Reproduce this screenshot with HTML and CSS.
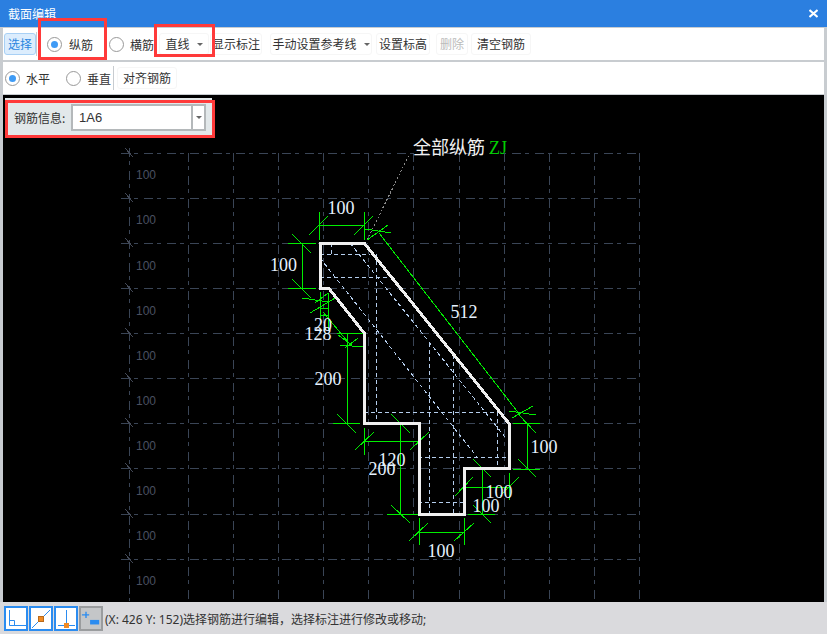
FILE: index.html
```html
<!DOCTYPE html>
<html lang="zh">
<head>
<meta charset="utf-8">
<title>截面编辑</title>
<link rel="stylesheet" href="styles.css">
</head>
<body>
<div class="window">
  <header class="titlebar">
    <span class="title">截面编辑</span>
    <svg class="close" width="9" height="9" viewBox="0 0 9 9"><path d="M.5 1L8.500 8M8.500 1L.5 8" stroke="#fff" stroke-width="2" fill="none"/></svg>
  </header>
  <div class="toolbar tb-one">
    <button class="tool selected">选择</button>
    <span class="vsep"></span>
    <label class="radio r-zong"><i class="dot on"></i>纵筋</label>
    <label class="radio r-heng"><i class="dot"></i>横筋</label>
    <button class="tool t-line">直线<i class="caret"></i></button>
    <button class="tool t-show">显示标注</button>
    <button class="tool t-manual">手动设置参考线<i class="caret"></i></button>
    <button class="tool t-elev">设置标高</button>
    <button class="tool t-del">删除</button>
    <button class="tool t-clear">清空钢筋</button>
  </div>
  <div class="toolbar tb-two">
    <label class="radio r-h"><i class="dot on"></i>水平</label>
    <label class="radio r-v"><i class="dot"></i>垂直</label>
    <span class="vsep"></span>
    <button class="tool t-align">对齐钢筋</button>
  </div>
  <main class="canvas">
    <div class="info">
      <span class="info-label">钢筋信息:</span>
      <div class="combo"><span class="combo-value">1A6</span><span class="combo-btn"><i class="caret"></i></span></div>
    </div>
    <svg class="drawing" width="827" height="507" viewBox="0 95 827 507">
      <g class="grid">
        <path d="M121 153.500H639M121 198.500H639M121 243.500H639M121 288.500H639M121 333.500H639M121 378.500H639M121 423.500H639M121 468.500H639M121 514.500H639M121 559.500H639"/>
        <path d="M129.500 148V601M188.500 153V601M233.500 153V601M278.500 153V601M323.500 153V601M368.500 153V601M413.500 153V601M459.500 153V601M504.500 153V601M549.500 153V601M594.500 153V601M639.500 153V601"/>
      </g>
      <path class="ticks" d="M125 148L133 157M125 193L133 202M125 238L133 247M125 283L133 292M125 328L133 337M125 373L133 382M125 418L133 427M125 463L133 472M125 509L133 518M125 554L133 563"/>
      <g class="axis-labels">
        <text x="136" y="179">100</text><text x="136" y="224">100</text><text x="136" y="270">100</text><text x="136" y="315">100</text><text x="136" y="360">100</text><text x="136" y="405">100</text><text x="136" y="450">100</text><text x="136" y="495">100</text><text x="136" y="540">100</text><text x="136" y="585">100</text>
      </g>
      <path class="leader" d="M367 240L409 155"/>
      <g class="inner">
        <path d="M320 254.500H370M320 277.500H390M331.500 243V254M376.500 254V423M364 412.500H500M418 457.500H509M418 502.500H464M429.500 343V514M453.500 355V514M497.500 412V469"/>
        <path d="M320 258L477 457M350 243L505 437"/>
      </g>
      <path class="dim" d="M319 225.500H364M319.500 212V240M364.500 212V240M309 235L328 216M354 235L373 216
        M302.500 243V288M288 243.500H316M288 288.500H316M292 234L311 253M292 279L311 298
        M379 233L520 415M365 229L391 233M367 240L388 225M509 411L536 415M512 418L533 406
        M302 298L328 302M320.500 292V320M328.500 293V330M310 313L337 297M315 303L328 293M320 308.500H328M320 315.500H328M323 312L348 342
        M337 333.500H363M347.500 333V423M340 345L363 347M345 348L358 338M338 335L352 345
        M333 423.500H360M337 414L356 433
        M364 441.500H419M364.500 428V455M419.500 428V455M355 450L374 432M410 450L429 432
        M400.500 423V514M387 423.500H418M387 514.500H418M391 414L410 433M391 505L410 523
        M527.500 423V469M513 423.500H540M513 469.500H540M518 414L536 433M518 459L536 477
        M482.500 469V514M468 469.500H495M468 514.500H495M473 459L491 477M473 505L491 523
        M464 487.500H509M464.500 475V500M509.500 473V500M455 496L473 477M500 496L519 477
        M419 532.500H464M419.500 518V545M464.500 518V545M409 541L428 523M454 541L474 523"/>
      <path class="outline" d="M320 243.500H364.500L509 423.500V468.500H464.500V514.500H419V423.500H364.500V333.500L329 288.500H320Z"/>
      <g class="labels">
        <text x="341" y="214">100</text><text x="283.500" y="271">100</text><text x="464" y="318">512</text>
        <text x="323" y="331">20</text><text x="318" y="340">128</text><text x="328" y="385">200</text>
        <text x="392" y="466">120</text><text x="382" y="475">200</text><text x="544" y="453">100</text>
        <text x="499" y="498">100</text><text x="486" y="512">100</text><text x="441" y="557">100</text>
      </g>
      <text class="note" x="413" y="154">全部纵筋 <tspan class="note-code">ZJ</tspan></text>
    </svg>
  </main>
  <footer class="statusbar">
    <button class="snap"><svg width="20" height="20" viewBox="0 0 20 20"><path d="M3.500 1V16.500H20M3.500 11.500H8.500V16.500" fill="none" stroke="#2b8cf0"/></svg></button>
    <button class="snap"><svg width="20" height="20" viewBox="0 0 20 20"><path d="M1 19L19 1" stroke="#2b8cf0"/><rect x="7.500" y="7.500" width="5" height="5" fill="#f08a24" stroke="#b86a1c"/></svg></button>
    <button class="snap"><svg width="20" height="20" viewBox="0 0 20 20"><path d="M10.500 1V16M2 16.500H19" fill="none" stroke="#2b8cf0"/><rect x="8" y="14" width="5" height="5" fill="#f08a24"/></svg></button>
    <button class="snap off"><svg width="22" height="20" viewBox="0 0 22 20"><path d="M1 5.500H9M5.500 2V9" fill="none" stroke="#2b8cf0" stroke-width="1.500"/><rect x="10" y="11" width="10" height="5" fill="#2b8cf0"/></svg></button>
    <span class="status-text">(X: 426 Y: 152)选择钢筋进行编辑，选择标注进行修改或移动;</span>
  </footer>
</div>
<div class="mark m-one"></div>
<div class="mark m-two"></div>
<div class="mark m-three"></div>
</body>
</html>
```
FILE: styles.css
```css
* { box-sizing: border-box; }
html, body { margin: 0; padding: 0; }
body {
  width: 827px;
  height: 634px;
  overflow: hidden;
  position: relative;
  background: #c8ccd0;
  font-family: "Noto Sans CJK SC", "Liberation Sans", sans-serif;
  font-size: 12px;
  color: #333;
}
.window { display: flex; flex-direction: column; height: 634px; }
.titlebar {
  height: 27px;
  flex: none;
  background: #2b7fe0;
  display: flex;
  align-items: center;
  justify-content: space-between;
  padding: 0 9px 0 8px;
  color: #fff;
  margin-bottom: 1px;
}
.title { line-height: 27px; }
.toolbar {
  flex: none;
  height: 32px;
  margin: 0 3px;
  background: #fff;
  display: flex;
  align-items: center;
}
.tb-one { margin-bottom: 2px; padding-left: 1px; }
.tb-two { margin-bottom: 1px; }
.tool {
  font: inherit;
  color: #333;
  background: #fff;
  border: 1px solid #f6f6f6;
  border-radius: 3px;
  height: 22px;
  line-height: 20px;
  padding: 0;
  display: inline-flex;
  align-items: center;
  justify-content: center;
  flex: none;
}
.tool.selected { width: 32px; background: #dcedfd; border-color: #a8d0f5; color: #2a86e0; }
.vsep { width: 1px; height: 24px; background: #c8ccd0; flex: none; }
.radio { display: inline-flex; align-items: center; flex: none; color: #333; }
.dot {
  width: 15px;
  height: 15px;
  border: 1px solid #999;
  border-radius: 50%;
  background: #fff;
  display: inline-block;
  position: relative;
  flex: none;
}
.dot.on::after {
  content: "";
  position: absolute;
  left: 3px; top: 3px;
  width: 7px; height: 7px;
  border-radius: 50%;
  background: #3f9bf5;
}
.caret {
  display: inline-block;
  width: 0; height: 0;
  border: 3px solid transparent;
  border-top: 3px solid #666;
  border-bottom: 0;
  margin-left: 7px;
}
.r-zong { margin-left: 10px; width: 62px; }
.r-zong .dot { margin-right: 7px; }
.r-heng { width: 48px; }
.r-heng .dot, .r-h .dot, .r-v .dot { margin-right: 6px; }
.t-line { width: 50px; margin-left: 2px; }
.t-show { width: 52px; margin-left: 1px; }
.t-manual { width: 102px; margin-left: 8px; }
.t-elev { width: 54px; margin-left: 4px; }
.t-del { width: 32px; margin-left: 6px; color: #bbb; }
.t-clear { width: 60px; margin-left: 3px; }
.r-h { margin-left: 2px; width: 61px; }
.r-v { width: 47px; }
.t-align { width: 60px; margin-left: 3px; }
.canvas {
  flex: none;
  height: 507px;
  margin: 0 3px 0 3px;
  background: #000;
  position: relative;
  overflow: hidden;
}
.info {
  position: absolute;
  left: 2px; top: 3px;
  width: 207px;
  height: 39px;
  background: #e2e8ea;
  display: flex;
  align-items: center;
  padding-left: 9px;
  z-index: 1;
  color: #333;
}
.info-label { width: 57px; flex: none; }
.combo {
  width: 135px;
  height: 27px;
  border: 2px solid #b4b8ba;
  background: #fff;
  display: flex;
  align-items: center;
}
.combo-value { flex: 1; padding-left: 6px; font-family: "Liberation Sans", sans-serif; font-size: 13px; color: #333; }
.combo-btn { width: 13px; height: 100%; border-left: 2px solid #b4b8ba; display: flex; align-items: center; justify-content: center; }
.combo-btn .caret { margin-left: 0; }
.drawing { display: block; position: absolute; left: -3px; top: 0; }
.grid path { fill: none; stroke: #3a4556; stroke-width: 1; stroke-dasharray: 9 4 4 6; shape-rendering: crispEdges; }
.ticks { fill: none; stroke: #444a58; shape-rendering: crispEdges; }
.axis-labels text { font-family: "Liberation Sans", sans-serif; font-size: 12px; fill: #4a5060; }
.leader { fill: none; stroke: #8a8a8a; stroke-dasharray: 2 2; shape-rendering: crispEdges; }
.inner path { fill: none; stroke: #b4cdec; stroke-dasharray: 4 3; shape-rendering: crispEdges; }
.dim { fill: none; stroke: #00ee00; stroke-width: 1; shape-rendering: crispEdges; }
.outline { fill: none; stroke: #f0f0f0; stroke-width: 3; shape-rendering: crispEdges; }
.labels text { font-family: "Liberation Serif", serif; font-size: 18px; fill: #e6f2ff; text-anchor: middle; }
.note { font-family: "Noto Sans CJK SC", sans-serif; font-size: 18px; fill: #f0f0f0; }
.note-code { font-family: "Liberation Serif", serif; fill: #00d000; }
.statusbar {
  flex: none;
  height: 33px;
  background: #dadadd;
  display: flex;
  align-items: center;
  padding: 0 0 0 4px;
  gap: 1px;
  color: #333;
}
.snap {
  width: 24px;
  height: 25px;
  padding: 0;
  border: 2px solid #2b8cf0;
  background: #fff;
  display: flex;
  align-items: center;
  justify-content: center;
  flex: none;
}
.snap.off { background: #c4c6c8; border-color: #9a9c9e; }
.status-text { margin-left: 1px; white-space: nowrap; font-family: "Noto Sans", "Noto Sans CJK SC", sans-serif; }
.mark { position: absolute; border: 3px solid #ff3a3a; pointer-events: none; z-index: 5; }
.m-one { left: 38px; top: 18px; width: 69px; height: 42px; }
.m-two { left: 154px; top: 24px; width: 61px; height: 33px; }
.m-three { left: 5px; top: 100px; width: 210px; height: 38px; }
```
